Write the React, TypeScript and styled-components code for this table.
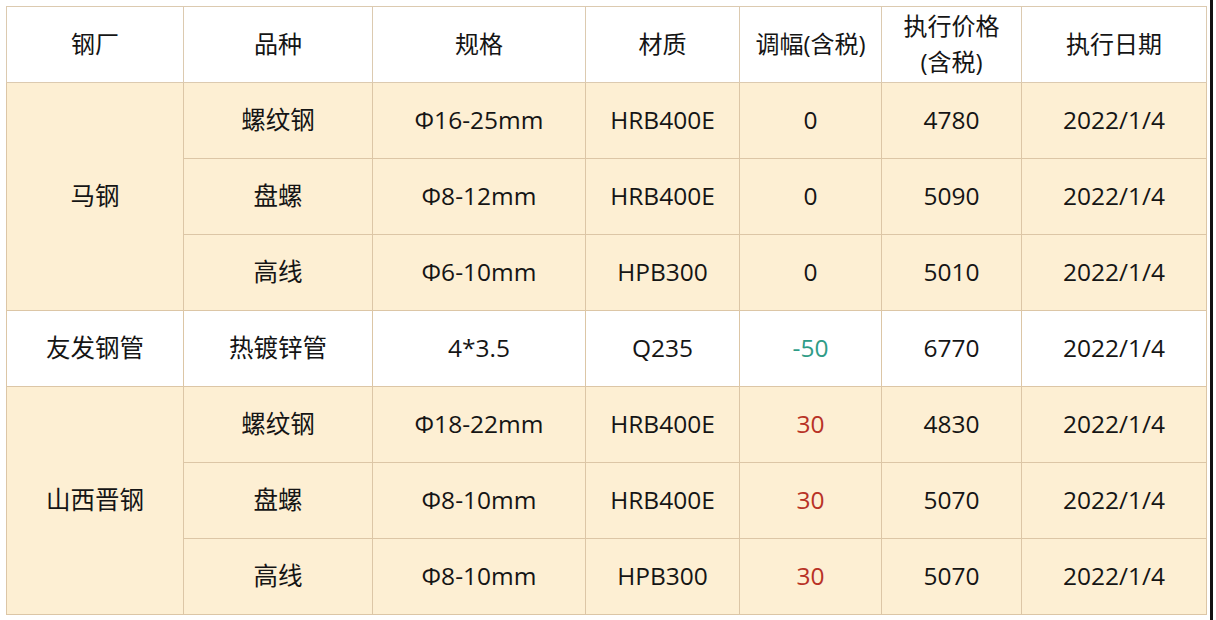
import styled, { createGlobalStyle } from "styled-components";

const GlobalStyle = createGlobalStyle`
  html, body {
    margin: 0;
    padding: 0;
    background: #ffffff;
  }
  body {
    font-family: "Open Sans", "Noto Sans CJK SC", sans-serif;
  }
`;

type Row = {
  mill?: string;
  span?: number;
  kind: string;
  spec: string;
  grade: string;
  change: number;
  price: number;
  date: string;
  tone: "cream" | "white";
};

const rows: Row[] = [
  { mill: "马钢", span: 3, kind: "螺纹钢", spec: "Φ16-25mm", grade: "HRB400E", change: 0, price: 4780, date: "2022/1/4", tone: "cream" },
  { kind: "盘螺", spec: "Φ8-12mm", grade: "HRB400E", change: 0, price: 5090, date: "2022/1/4", tone: "cream" },
  { kind: "高线", spec: "Φ6-10mm", grade: "HPB300", change: 0, price: 5010, date: "2022/1/4", tone: "cream" },
  { mill: "友发钢管", span: 1, kind: "热镀锌管", spec: "4*3.5", grade: "Q235", change: -50, price: 6770, date: "2022/1/4", tone: "white" },
  { mill: "山西晋钢", span: 3, kind: "螺纹钢", spec: "Φ18-22mm", grade: "HRB400E", change: 30, price: 4830, date: "2022/1/4", tone: "cream" },
  { kind: "盘螺", spec: "Φ8-10mm", grade: "HRB400E", change: 30, price: 5070, date: "2022/1/4", tone: "cream" },
  { kind: "高线", spec: "Φ8-10mm", grade: "HPB300", change: 30, price: 5070, date: "2022/1/4", tone: "cream" },
];

const columns = [177, 189, 213, 154, 142, 140, 185];

export default function App() {
  return (
    <Page>
      <GlobalStyle />
      <PriceTable>
        <colgroup>
          {columns.map((w, i) => (
            <col key={i} style={{ width: w }} />
          ))}
        </colgroup>
        <thead>
          <tr>
            <Head>钢厂</Head>
            <Head>品种</Head>
            <Head>规格</Head>
            <Head>材质</Head>
            <Head>调幅(含税)</Head>
            <Head>
              执行价格
              <br />
              (含税)
            </Head>
            <Head>执行日期</Head>
          </tr>
        </thead>
        <tbody>
          {rows.map((r, i) => (
            <tr key={i}>
              {r.mill && (
                <Cell rowSpan={r.span} $tone={r.tone}>
                  {r.mill}
                </Cell>
              )}
              <Cell $tone={r.tone}>{r.kind}</Cell>
              <Cell $tone={r.tone}>{r.spec}</Cell>
              <Cell $tone={r.tone}>{r.grade}</Cell>
              <Cell $tone={r.tone}>
                <Change $dir={r.change > 0 ? "up" : r.change < 0 ? "down" : "flat"}>
                  {r.change}
                </Change>
              </Cell>
              <Cell $tone={r.tone}>{r.price}</Cell>
              <Cell $tone={r.tone}>{r.date}</Cell>
            </tr>
          ))}
        </tbody>
      </PriceTable>
    </Page>
  );
}

const Page = styled.div`
  width: 1213px;
  height: 620px;
  padding: 6px 0 0 6px;
  box-sizing: border-box;
  border-right: 3px solid #141414;
  background: #ffffff;
  overflow: hidden;
`;

const PriceTable = styled.table`
  width: 1201px;
  table-layout: fixed;
  border-collapse: collapse;
  border: 1px solid #cfc6bb;
  color: #151515;
  font-size: 24.5px;
`;

const Head = styled.th`
  height: 73px;
  padding: 0 0 2px;
  font-weight: 400;
  font-size: 24px;
  line-height: 36px;
  text-align: center;
  vertical-align: middle;
  background: #ffffff;
  border: 1px solid #dccab0;
`;

const Cell = styled.td<{ $tone: "cream" | "white" }>`
  height: 74px;
  padding: 0 0 1px;
  line-height: 30px;
  text-align: center;
  vertical-align: middle;
  background: ${(p) => (p.$tone === "cream" ? "#fdefd3" : "#ffffff")};
  border: 1px solid #dcc6a6;
`;

const Change = styled.span<{ $dir: "up" | "down" | "flat" }>`
  color: ${(p) =>
    p.$dir === "up" ? "#b83226" : p.$dir === "down" ? "#2f9c87" : "#151515"};
`;
